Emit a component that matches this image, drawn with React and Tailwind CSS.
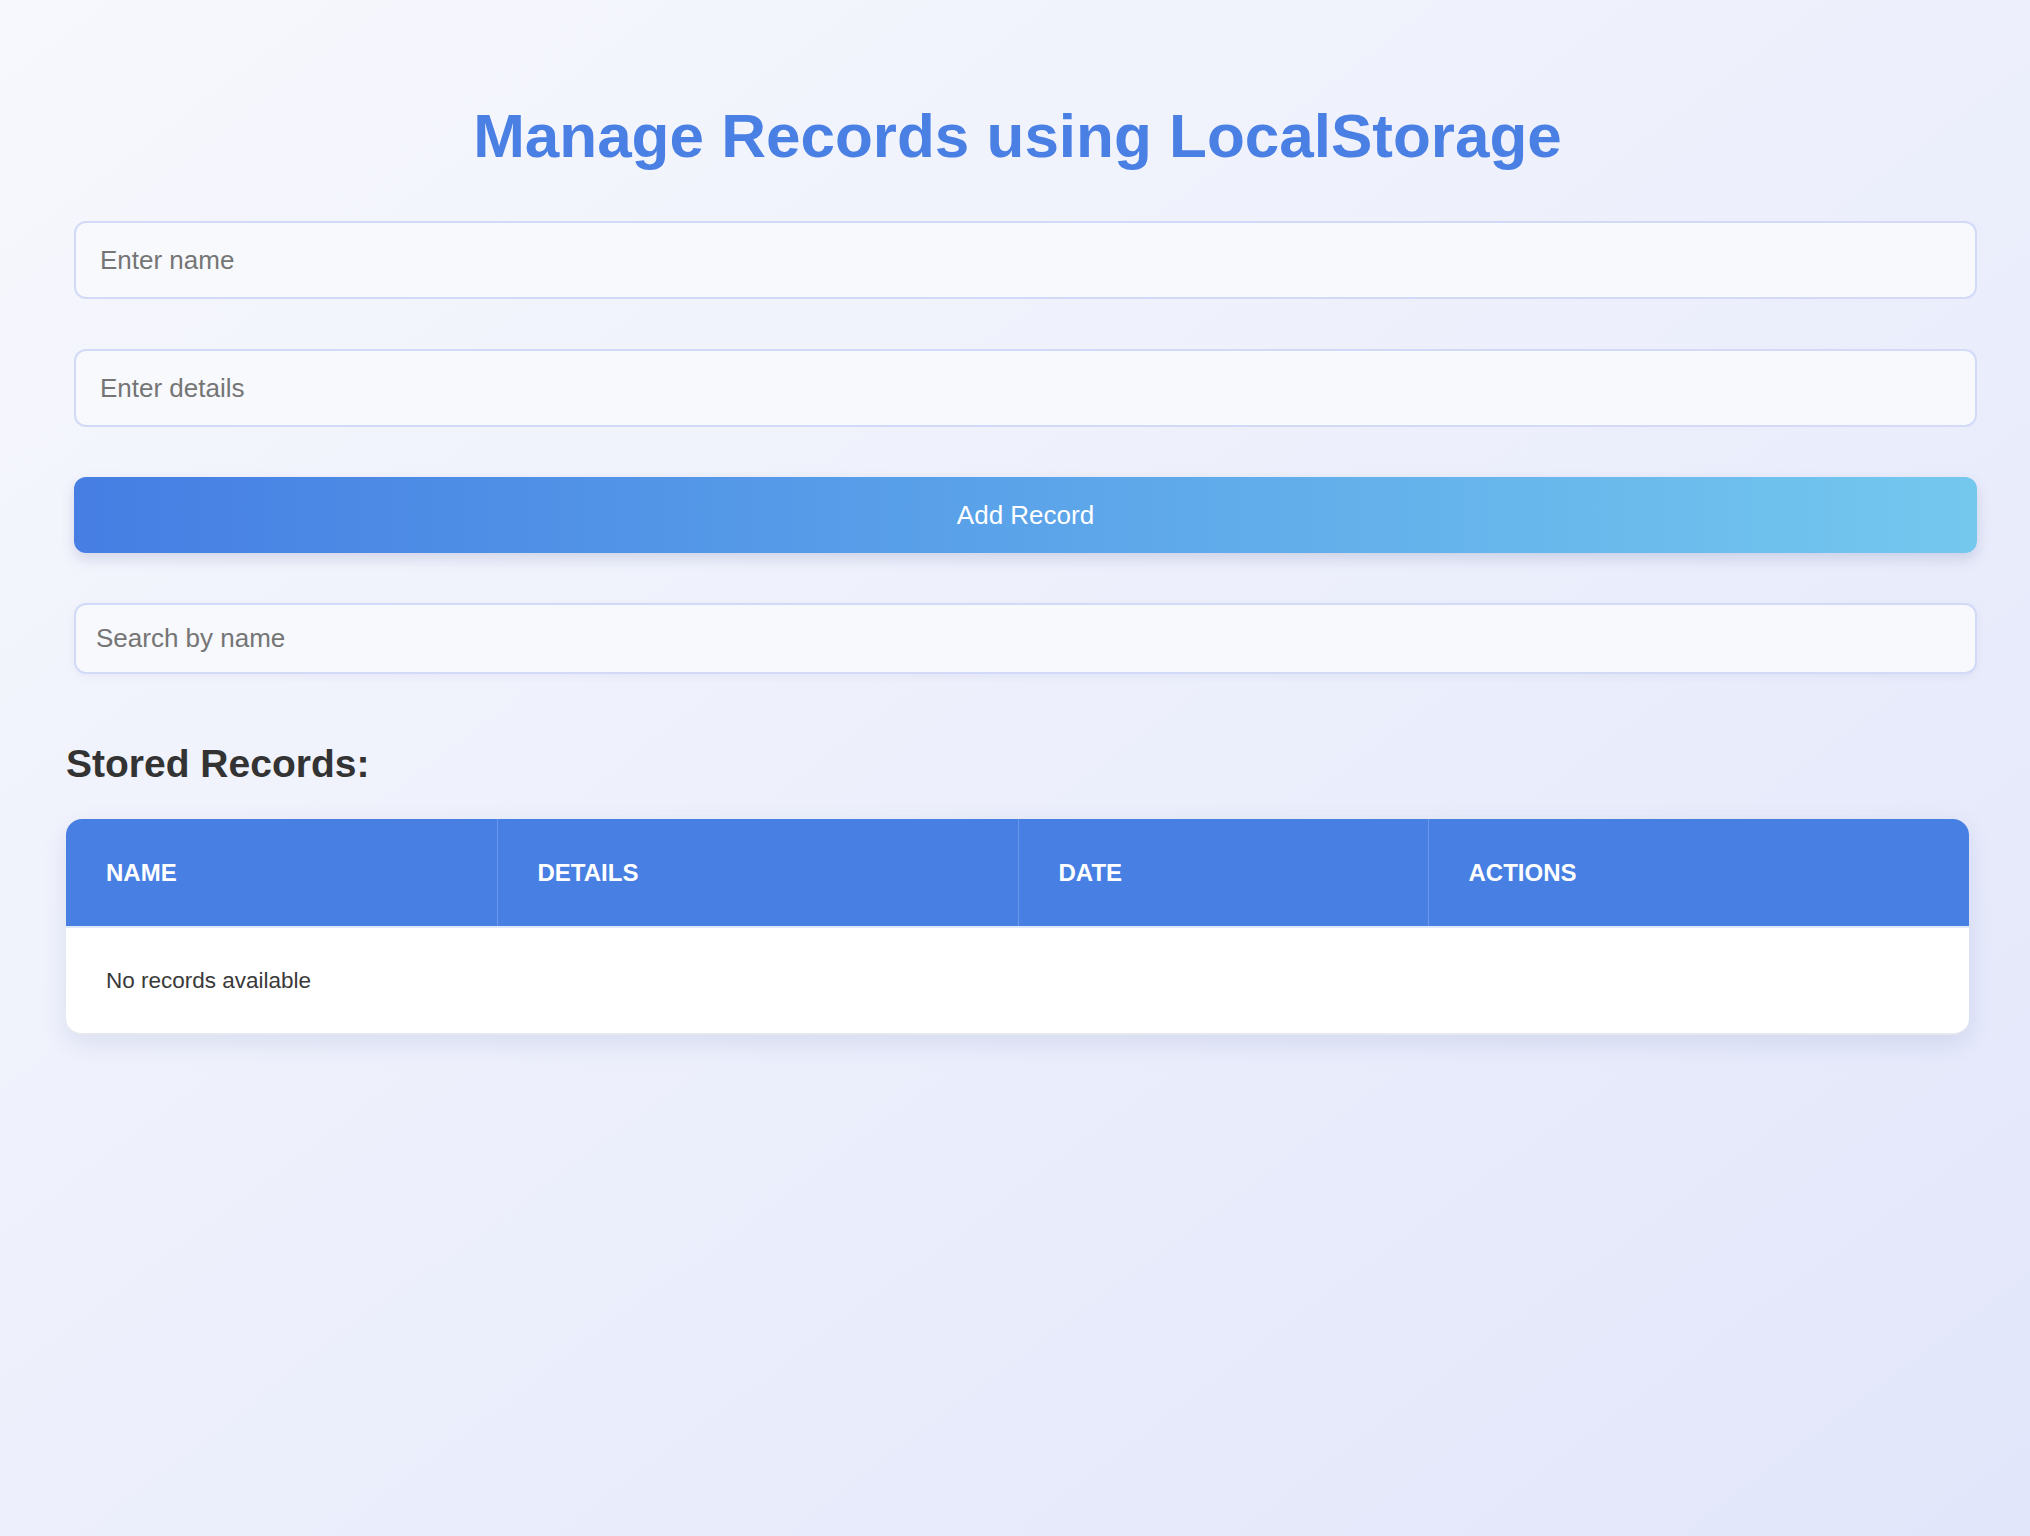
import { useState } from 'react';

const font = { fontFamily: '"Liberation Sans", Arial, Helvetica, sans-serif' };

export default function App() {
  const [name, setName] = useState('');
  const [details, setDetails] = useState('');
  const [search, setSearch] = useState('');
  const [records, setRecords] = useState([]);

  const addRecord = () => {
    if (!name.trim()) return;
    setRecords([...records, { name, details, date: new Date().toLocaleDateString() }]);
    setName('');
    setDetails('');
  };

  const shown = records.filter((r) => r.name.toLowerCase().includes(search.toLowerCase()));

  return (
    <div
      className="min-h-[1536px] w-full bg-gradient-to-br from-[#f7f8fd] to-[#e2e6fa] pt-[101px] pb-20"
      style={font}
    >
      <div className="ml-[66px] w-[1903px]">
        <h1 className="text-center text-[62px] leading-[70px] font-bold text-[#4a7fe4]">
          Manage Records using LocalStorage
        </h1>

        <input
          value={name}
          onChange={(e) => setName(e.target.value)}
          placeholder="Enter name"
          className="mt-[50px] ml-2 block w-full h-[78px] px-6 rounded-[12px] border-2 border-[#d2daf8] bg-[#f7f9fd] text-[26px] text-[#333] placeholder:text-[#757575] outline-none"
        />
        <input
          value={details}
          onChange={(e) => setDetails(e.target.value)}
          placeholder="Enter details"
          className="mt-[50px] ml-2 block w-full h-[78px] px-6 rounded-[12px] border-2 border-[#d2daf8] bg-[#f7f9fd] text-[26px] text-[#333] placeholder:text-[#757575] outline-none"
        />
        <button
          onClick={addRecord}
          className="mt-[50px] ml-2 block w-full h-[76px] rounded-[12px] bg-gradient-to-r from-[#467ee3] to-[#74c8ee] text-white text-[26px] shadow-[0_6px_14px_rgba(60,80,140,0.18)]"
        >
          Add Record
        </button>
        <input
          value={search}
          onChange={(e) => setSearch(e.target.value)}
          placeholder="Search by name"
          className="mt-[50px] ml-2 block w-full h-[71px] px-5 rounded-[12px] border-2 border-[#d2daf8] bg-[#f7f9fd] text-[26px] text-[#333] placeholder:text-[#757575] outline-none shadow-[0_3px_8px_rgba(60,80,140,0.06)]"
        />

        <h2 className="mt-[68px] text-[39px] leading-[44px] font-bold text-[#333]">Stored Records:</h2>

        {/* records table */}
        <div className="mt-[33px] rounded-[16px] overflow-hidden bg-white shadow-[0_8px_24px_rgba(60,80,160,0.12)] border-b-2 border-[#e6e8ef]">
          <table className="w-full border-collapse text-left">
            <thead>
              <tr className="bg-[#477fe3] text-white text-[24px] font-bold uppercase h-[108px] border-b-2 border-[#dfe8fb]">
                <th className="w-[431px] px-10 font-bold">Name</th>
                <th className="w-[521px] px-10 font-bold border-l border-[#6a97ea]">Details</th>
                <th className="w-[410px] px-10 font-bold border-l border-[#6a97ea]">Date</th>
                <th className="px-10 font-bold border-l border-[#6a97ea]">Actions</th>
              </tr>
            </thead>
            <tbody>
              {shown.length === 0 ? (
                <tr className="h-[106px]">
                  <td colSpan={4} className="px-10 text-[22.5px] text-[#3a3a3a]">
                    No records available
                  </td>
                </tr>
              ) : (
                shown.map((r, i) => (
                  <tr key={i} className="h-[106px] text-[22.5px] text-[#3a3a3a] border-b border-[#eee]">
                    <td className="px-10">{r.name}</td>
                    <td className="px-10">{r.details}</td>
                    <td className="px-10">{r.date}</td>
                    <td className="px-10">
                      <button
                        onClick={() => setRecords(records.filter((x) => x !== r))}
                        className="px-4 py-2 rounded-lg bg-red-500 text-white text-lg"
                      >
                        Delete
                      </button>
                    </td>
                  </tr>
                ))
              )}
            </tbody>
          </table>
        </div>
      </div>
    </div>
  );
}
